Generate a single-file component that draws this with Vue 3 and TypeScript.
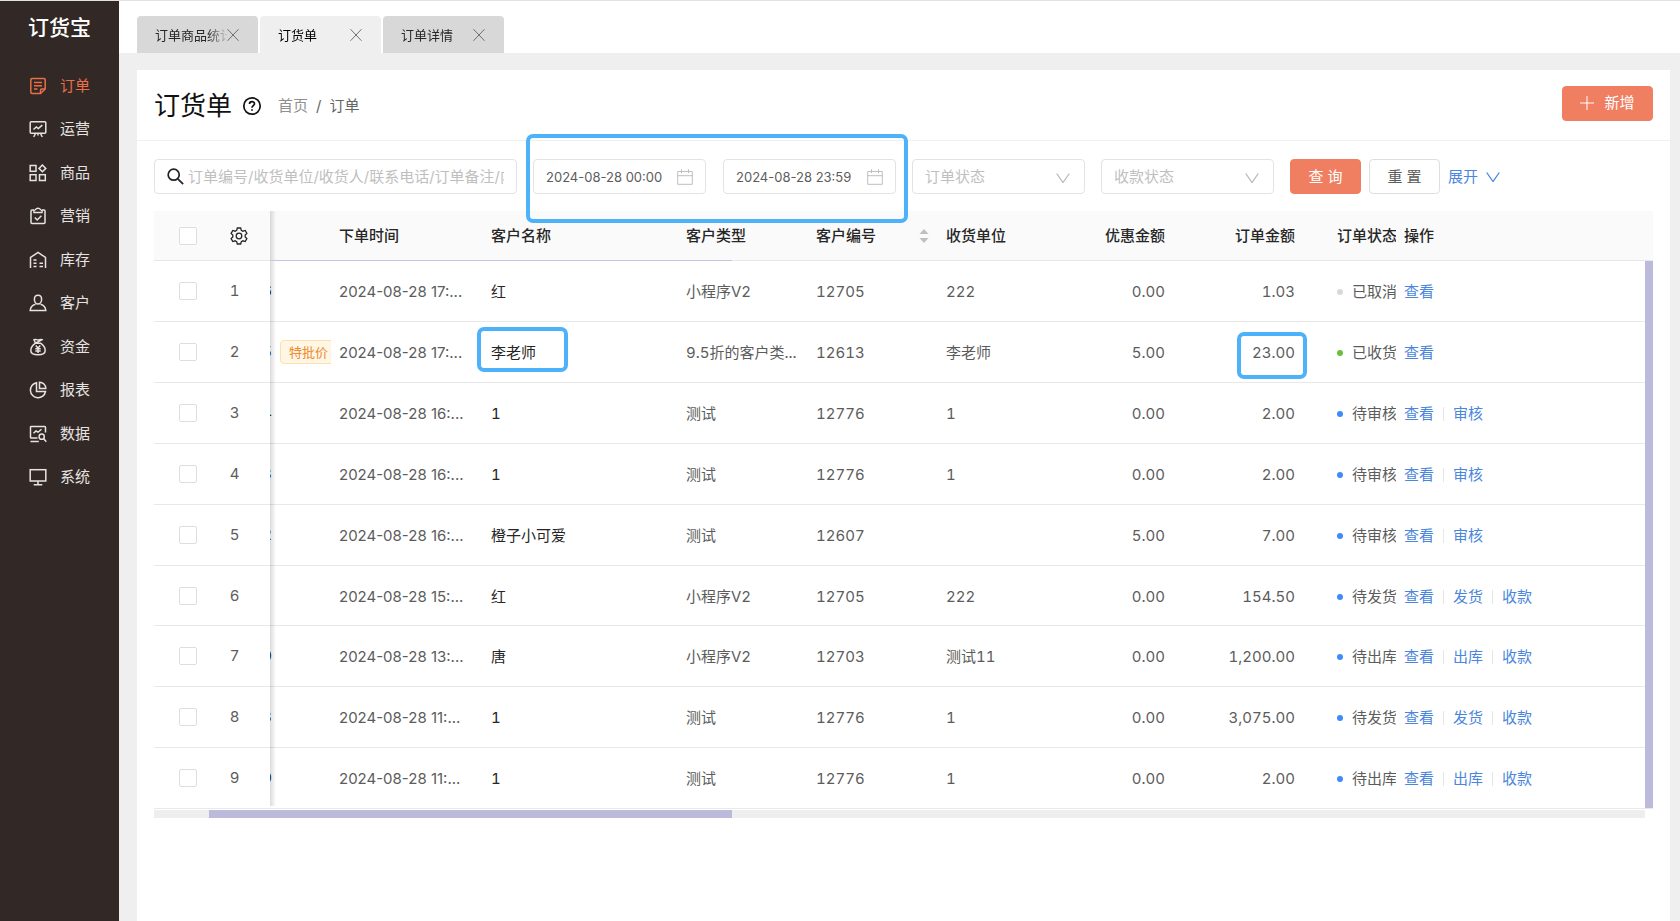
<script setup lang="ts">
import { ref } from 'vue'

interface Row {
  no: string
  time: string
  name: string
  type: string
  code: string
  unit: string
  discount: string
  amount: string
  status: string
  tone: 'gray' | 'green' | 'blue'
  actions: string[]
  tag?: string
  mark?: boolean
}

const menu = [
  { label: '订单', icon: 'order' },
  { label: '运营', icon: 'board' },
  { label: '商品', icon: 'goods' },
  { label: '营销', icon: 'clip' },
  { label: '库存', icon: 'store' },
  { label: '客户', icon: 'user' },
  { label: '资金', icon: 'money' },
  { label: '报表', icon: 'pie' },
  { label: '数据', icon: 'data' },
  { label: '系统', icon: 'screen' },
]

const tabs = ['订单商品统计', '订货单', '订单详情']
const activeTab = ref(1)
const keyword = ref('')
const start = ref('2024-08-28 00:00')
const end = ref('2024-08-28 23:59')
const orderStatus = ref('')
const payStatus = ref('')

const rows: Row[] = [
  { no: '6', time: '2024-08-28 17:...', name: '红', type: '小程序V2', code: '12705', unit: '222', discount: '0.00', amount: '1.03', status: '已取消', tone: 'gray', actions: ['查看'] },
  { no: '5', time: '2024-08-28 17:...', name: '李老师', type: '9.5折的客户类...', code: '12613', unit: '李老师', discount: '5.00', amount: '23.00', status: '已收货', tone: 'green', actions: ['查看'], tag: '特批价', mark: true },
  { no: '4', time: '2024-08-28 16:...', name: '1', type: '测试', code: '12776', unit: '1', discount: '0.00', amount: '2.00', status: '待审核', tone: 'blue', actions: ['查看', '审核'] },
  { no: '3', time: '2024-08-28 16:...', name: '1', type: '测试', code: '12776', unit: '1', discount: '0.00', amount: '2.00', status: '待审核', tone: 'blue', actions: ['查看', '审核'] },
  { no: '2', time: '2024-08-28 16:...', name: '橙子小可爱', type: '测试', code: '12607', unit: '', discount: '5.00', amount: '7.00', status: '待审核', tone: 'blue', actions: ['查看', '审核'] },
  { no: '', time: '2024-08-28 15:...', name: '红', type: '小程序V2', code: '12705', unit: '222', discount: '0.00', amount: '154.50', status: '待发货', tone: 'blue', actions: ['查看', '发货', '收款'] },
  { no: '0', time: '2024-08-28 13:...', name: '唐', type: '小程序V2', code: '12703', unit: '测试11', discount: '0.00', amount: '1,200.00', status: '待出库', tone: 'blue', actions: ['查看', '出库', '收款'] },
  { no: '3', time: '2024-08-28 11:...', name: '1', type: '测试', code: '12776', unit: '1', discount: '0.00', amount: '3,075.00', status: '待发货', tone: 'blue', actions: ['查看', '发货', '收款'] },
  { no: '0', time: '2024-08-28 11:...', name: '1', type: '测试', code: '12776', unit: '1', discount: '0.00', amount: '2.00', status: '待出库', tone: 'blue', actions: ['查看', '出库', '收款'] },
]
</script>

<template>
  <div class="app">
    <aside class="side">
      <div class="logo">订货宝</div>
      <nav class="menu">
        <a v-for="(m, i) in menu" :key="m.label" href="#" class="item" :class="{ on: i === 0 }">
          <svg class="ico" viewBox="0 0 18 18" aria-hidden="true">
            <g v-if="m.icon === 'order'">
              <path d="M11.5 16.5H3a1.2 1.2 0 0 1-1.2-1.2V2.7A1.2 1.2 0 0 1 3 1.5h12a1.2 1.2 0 0 1 1.2 1.2V12z" />
              <path d="M16 12h-3.3a1.2 1.2 0 0 0-1.2 1.2v3.2M5 5.500h8M5 8.700h8M5 12h3.500" />
            </g>
            <g v-else-if="m.icon === 'board'">
              <rect x="1.2" y="1.7" width="15.6" height="11.6" rx="1" />
              <path d="M4.500 9.500 7.300 7l2 1.500 4-3.300M6.500 13.500 4.700 17M11.500 13.500l1.800 3.500M9 13.500v2" />
            </g>
            <g v-else-if="m.icon === 'goods'">
              <rect x="1.2" y="1.5" width="5.8" height="5.8" />
              <rect x="1.2" y="10.7" width="5.8" height="5.8" />
              <rect x="10.5" y="10.7" width="5.8" height="5.8" />
              <path d="m13.400 1 3.400 3.400-3.400 3.400L10 4.400z" />
            </g>
            <g v-else-if="m.icon === 'clip'">
              <path d="M5 3H3a1 1 0 0 0-1 1v11.500a1 1 0 0 0 1 1h12a1 1 0 0 0 1-1V4a1 1 0 0 0-1-1h-2" />
              <path d="M5 5.500V3.700C6 3.700 6.500 1.200 9 1.200s3 2.500 4 2.500v1.800zM5.800 10.500 8.200 13l4.200-4.200" />
            </g>
            <g v-else-if="m.icon === 'store'">
              <path d="M1.500 17V6.500L9 1.500l7.500 5V17M4.500 9h3M4.500 12.200h3M4.500 15.500h3M10.500 12.200h3.500M10.500 15.500h3.500" />
            </g>
            <g v-else-if="m.icon === 'user'">
              <path d="M9 1.200c2.300 0 3.600 1.700 3.600 4S11.200 10 9 10 5.400 7.500 5.400 5.200 6.700 1.200 9 1.200z" />
              <path d="M6.500 10.200C3.500 11 1.500 12.800 1.200 16.500h15.600c-.3-3.700-2.300-5.500-5.300-6.300" />
            </g>
            <g v-else-if="m.icon === 'money'">
              <path d="M6.500 5.200h5c3 2 4.700 4.500 4.700 7.300 0 2.700-2 4.300-7.200 4.300s-7.200-1.600-7.200-4.300c0-2.800 1.700-5.300 4.700-7.300L5 1.700c1.500-.9 2.500.3 4 .3s2.500-1.200 4-.3z" />
              <path d="M6.700 7.500 9 10l2.300-2.500M9 10v5M6.300 10.700h5.400M6.300 13h5.400" />
            </g>
            <g v-else-if="m.icon === 'pie'">
              <path d="M7.500 1.700A7.600 7.600 0 1 0 16.500 10.500h-9z" />
              <path d="M10.500 1.200v6.300h6.300c0-3.500-2.800-6.300-6.300-6.300z" />
            </g>
            <g v-else-if="m.icon === 'data'">
              <path d="M16.500 7.500V2.200a.8.8 0 0 0-.8-.8H2.300a.8.8 0 0 0-.8.8v10.100c0 .5.300.8.8.8h6.200M1.500 16.500h8.300M4.500 8.300 7 6l2 1.200 3.500-3" />
              <circle cx="12.7" cy="11.7" r="2.6" />
              <path d="m14.500 13.600 2.800 3.200" />
            </g>
            <g v-else>
              <rect x="1.2" y="1.7" width="15.6" height="11.3" />
              <path d="M9 13v3.500M4.700 16.700h8.600" />
            </g>
          </svg>
          <span>{{ m.label }}</span>
        </a>
      </nav>
    </aside>

    <div class="main">
      <div class="tabs">
        <div v-for="(t, i) in tabs" :key="t" class="tab" :class="{ active: i === activeTab }">
          <button class="tab-name" type="button" @click="activeTab = i">{{ t }}</button>
          <button class="tab-close" type="button" aria-label="关闭">
            <svg viewBox="0 0 12 12"><path d="M.5.200 11.500 11.800M11.500.200.5 11.800" /></svg>
          </button>
        </div>
      </div>

      <main class="card">
        <header class="head">
          <h1>订货单</h1>
          <svg class="help" viewBox="0 0 20 20" aria-hidden="true">
            <circle cx="10" cy="10" r="8.2" />
            <path d="M7.500 8c0-3.200 5-3.100 5-.2 0 1.800-2.500 2-2.500 3.900" />
            <path d="M10 13.200v1.500" />
          </svg>
          <div class="crumb"><a href="#">首页</a><i>/</i><span>订单</span></div>
          <button class="btn primary add" type="button">
            <svg viewBox="0 0 14 14" aria-hidden="true"><path d="M7 0v14M0 7h14" /></svg>新增
          </button>
        </header>

        <form class="filters" @submit.prevent>
          <label class="field search">
            <svg viewBox="0 0 16 16" aria-hidden="true"><circle cx="6.3" cy="6.3" r="5.2" /><path d="m10.200 10.200 5 5" /></svg>
            <input v-model="keyword" type="text" aria-label="关键字" placeholder="订单编号/收货单位/收货人/联系电话/订单备注/内部备注">
          </label>
          <div class="range">
            <label class="field date">
              <input v-model="start" type="text" aria-label="开始时间">
              <svg viewBox="0 0 16 16" aria-hidden="true"><path d="M.7 2.500h14.600v12.800H.7zM.7 6.700h14.600M4.500.200v4M11.500.200v4" /></svg>
            </label>
            <label class="field date">
              <input v-model="end" type="text" aria-label="结束时间">
              <svg viewBox="0 0 16 16" aria-hidden="true"><path d="M.7 2.500h14.600v12.800H.7zM.7 6.700h14.600M4.500.200v4M11.500.200v4" /></svg>
            </label>
            <span class="mark mark-range"></span>
          </div>
          <label class="field pick">
            <select v-model="orderStatus" aria-label="订单状态"><option value="">订单状态</option></select>
            <svg viewBox="0 0 14 10" aria-hidden="true"><path d="m.7.500 6.300 9 6.300-9" /></svg>
          </label>
          <label class="field pick">
            <select v-model="payStatus" aria-label="收款状态"><option value="">收款状态</option></select>
            <svg viewBox="0 0 14 10" aria-hidden="true"><path d="m.7.500 6.300 9 6.300-9" /></svg>
          </label>
          <div class="acts">
            <button class="btn primary" type="submit">查 询</button>
            <button class="btn" type="reset">重 置</button>
            <button class="more" type="button">
              展开<svg viewBox="0 0 14 10" aria-hidden="true"><path d="m.7.500 6.300 9 6.300-9" /></svg>
            </button>
          </div>
        </form>

        <div class="grid">
          <table>
            <colgroup>
              <col class="c-check"><col class="c-num"><col class="c-tag"><col class="c-time"><col class="c-name"><col class="c-type">
              <col class="c-code"><col class="c-unit"><col class="c-disc"><col class="c-amt"><col class="c-stat"><col><col class="c-bar">
            </colgroup>
            <thead>
              <tr>
                <th class="check"><input type="checkbox" aria-label="全选"></th>
                <th class="num">
                  <svg class="gear" viewBox="0 0 18 18" aria-label="设置">
                    <path d="M7.300 1h3.400l.6 2.300 1.600.9 2.300-.7 1.700 2.900-1.700 1.700v1.800l1.700 1.700-1.700 2.900-2.300-.7-1.600.9-.6 2.300H7.300l-.6-2.300-1.600-.9-2.300.7-1.700-2.900 1.700-1.700V8.100L1.100 6.400l1.700-2.900 2.300.7 1.600-.9z" />
                    <circle cx="9" cy="9" r="2.8" />
                  </svg>
                </th>
                <th></th>
                <th>下单时间</th>
                <th>客户名称</th>
                <th>客户类型</th>
                <th>
                  <div class="sortable">客户编号<svg viewBox="0 0 10 14" aria-hidden="true"><path d="m5 0 4.500 5H.500zM5 14l4.500-5H.500z" /></svg></div>
                </th>
                <th>收货单位</th>
                <th class="r">优惠金额</th>
                <th class="r">订单金额</th>
                <th class="stat"><div>订单状态</div></th>
                <th>操作</th>
                <th></th>
              </tr>
            </thead>
            <tbody>
              <tr v-for="(r, i) in rows" :key="i">
                <td class="check"><input type="checkbox" :aria-label="'选择第' + (i + 1) + '行'"></td>
                <td class="num">{{ i + 1 }}</td>
                <td class="tagcell"><div><span class="no">{{ r.no }}</span><span v-if="r.tag" class="tag">{{ r.tag }}</span></div></td>
                <td class="time">{{ r.time }}</td>
                <td class="dark"><span class="hold">{{ r.name }}<span v-if="r.mark" class="mark mark-name"></span></span></td>
                <td>{{ r.type }}</td>
                <td>{{ r.code }}</td>
                <td>{{ r.unit }}</td>
                <td class="r">{{ r.discount }}</td>
                <td class="r"><span class="hold">{{ r.amount }}<span v-if="r.mark" class="mark mark-amt"></span></span></td>
                <td class="stat"><div><span class="dot" :class="r.tone"></span>{{ r.status }}</div></td>
                <td><div class="links"><a v-for="a in r.actions" :key="a" href="#">{{ a }}</a></div></td>
                <td v-if="i === 0" class="vbar" :rowspan="rows.length"></td>
              </tr>
            </tbody>
          </table>
          <span class="edge"></span>
          <span class="headline"></span>
          <div class="hbar"><span></span></div>
        </div>
      </main>
    </div>
  </div>
</template>

<style>
body {
  background: #efefef;
}
</style>

<style scoped>
* {
  box-sizing: border-box;
}
.app {
  display: flex;
  min-height: 100vh;
  border-top: 1px solid #e2e2e2;
  font: 15px/22px Inter, "Noto Sans CJK SC", sans-serif;
  color: #5c5c5c;
}
button,
input,
select {
  font: inherit;
  color: inherit;
}
button {
  border: 0;
  padding: 0;
  background: none;
  cursor: pointer;
}
a {
  text-decoration: none;
  color: inherit;
}
svg {
  fill: none;
  stroke: currentColor;
  flex: none;
}

/* sidebar */
.side {
  flex: 0 0 119px;
  background: #322926;
  color: #e6e3e2;
}
.logo {
  height: 63px;
  padding: 12px 0 0 28px;
  font-size: 21px;
  line-height: 30px;
  font-weight: 500;
  color: #fff;
}
.menu {
  height: 435px;
  display: grid;
  grid-auto-rows: 1fr;
}
.item {
  display: flex;
  align-items: center;
  gap: 13px;
  padding-left: 29px;
}
.item.on {
  color: #ea6e47;
}
.ico {
  width: 18px;
  height: 18px;
  stroke-width: 1.5;
}

/* tabs */
.main {
  flex: 1;
  min-width: 0;
  display: flex;
  flex-direction: column;
  background: #efefef;
}
.tabs {
  display: flex;
  gap: 2px;
  height: 52px;
  padding: 15px 18px 0;
  background: #fff;
}
.tab {
  width: 121px;
  display: flex;
  align-items: center;
  padding: 0 19px 0 18px;
  border-radius: 4px 4px 0 0;
  background: #d8d8d8;
  color: #262626;
  font-size: 13px;
}
.tab.active {
  background: #efefef;
  color: #000;
}
.tab-name {
  flex: 1;
  min-width: 0;
  overflow: hidden;
  white-space: nowrap;
  text-align: left;
  -webkit-mask-image: linear-gradient(90deg, #000 52px, transparent 74px);
  mask-image: linear-gradient(90deg, #000 52px, transparent 74px);
}
.tab-close {
  flex: none;
  display: flex;
  color: #707070;
}
.tab-close svg {
  width: 12px;
  height: 12px;
}

/* card */
.card {
  flex: 1;
  margin: 17px 10px 0 18px;
  background: #fff;
}
.head {
  height: 71px;
  display: flex;
  align-items: center;
  padding: 2px 17px 0;
  border-bottom: 1px solid #f0f0f0;
}
h1 {
  margin: 0;
  font-size: 26px;
  line-height: 36px;
  font-weight: 400;
  color: #111;
}
.help {
  width: 20px;
  height: 20px;
  margin-left: 10px;
  color: #111;
  stroke-width: 1.7;
}
.crumb {
  margin-left: 16px;
  color: #666;
}
.crumb a {
  color: #8f8f8f;
}
.crumb i {
  margin: 0 8px;
  font-style: normal;
}
.btn {
  height: 35px;
  width: 71px;
  border: 1px solid #dedede;
  border-radius: 4px;
  background: #fff;
  white-space: nowrap;
}
.btn.primary {
  border-color: #f07f62;
  background: #f07f62;
  color: #fff;
}
.add {
  width: 91px;
  margin: 0 0 6px auto;
  display: flex;
  align-items: center;
  justify-content: center;
  gap: 10px;
}
.add svg {
  width: 14px;
  height: 14px;
}

/* filters */
.filters {
  display: flex;
  gap: 16px;
  padding: 18px 17px 17px;
}
.field {
  height: 35px;
  display: flex;
  align-items: center;
  border: 1px solid #e3e3e3;
  border-radius: 4px;
  background: #fff;
}
.field input,
.field select {
  flex: 1;
  min-width: 0;
  width: 100%;
  height: 30px;
  padding: 0;
  border: 0;
  outline: 0;
  background: none;
  appearance: none;
}
.field ::placeholder {
  color: #bfbfbf;
  opacity: 1;
}
.search {
  flex: 0 1 363px;
  padding: 0 12px;
  gap: 4px;
}
.search svg {
  width: 17px;
  height: 17px;
  color: #222;
  stroke-width: 1.6;
}
.range {
  position: relative;
  display: flex;
  gap: 17px;
}
.date {
  width: 173px;
  padding: 0 12px;
  font-size: 13px;
}
.date svg {
  width: 16px;
  height: 16px;
  color: #bfbfbf;
}
.pick {
  width: 173px;
  padding: 0 14px 0 12px;
}
.pick select {
  color: #bfbfbf;
}
.pick svg {
  width: 14px;
  height: 10px;
  margin-top: 3px;
  color: #b5b5b5;
  stroke-width: 1.2;
}
.acts {
  display: flex;
  gap: 8px;
}
.more {
  display: flex;
  align-items: center;
  gap: 8px;
  color: #4a86dd;
}
.more svg {
  width: 14px;
  height: 10px;
  stroke-width: 1.3;
}

/* table */
.grid {
  position: relative;
  margin: 0 17px;
}
table {
  width: 100%;
  table-layout: fixed;
  border-collapse: separate;
  border-spacing: 0;
  font-variant-numeric: tabular-nums;
}
.c-check { width: 62px; }
.c-num { width: 54px; }
.c-tag { width: 61px; }
.c-time { width: 152px; }
.c-name { width: 195px; }
.c-type { width: 130px; }
.c-code { width: 130px; }
.c-unit { width: 129px; }
.c-disc { width: 106px; }
.c-amt { width: 130px; }
.c-stat { width: 93px; }
.c-bar { width: 8px; }
th,
td {
  padding: 0 8px;
  border-bottom: 1px solid #e8e8e8;
  text-align: left;
  white-space: nowrap;
  font-weight: 400;
}
th {
  height: 50px;
  background: #fafafa;
  color: #262626;
  font-weight: 500;
}
td {
  height: 61px;
  padding-top: 2px;
}
tbody tr:nth-child(6) td {
  height: 60px;
}
.time {
  font-variant-numeric: normal;
}
.check {
  padding: 0 0 0 25px;
}
.check input {
  display: block;
  appearance: none;
  width: 18px;
  height: 18px;
  margin: 0;
  border: 1px solid #dedede;
  border-radius: 2px;
  background: #fff;
}
td.num {
  padding: 0 17px 0 0;
  text-align: center;
}
th.num {
  padding: 0 0 0 14px;
}
.gear {
  display: block;
  width: 18px;
  height: 18px;
  stroke-width: 1.3;
}
.r {
  text-align: right;
}
.dark {
  color: #262626;
}
.sortable {
  display: flex;
  align-items: center;
  justify-content: space-between;
}
.sortable svg {
  width: 10px;
  height: 14px;
  margin-right: 1px;
  fill: #bfbfbf;
  stroke: none;
}
td.tagcell {
  padding: 0;
}
.tagcell div {
  display: flex;
  align-items: center;
  gap: 8px;
  overflow: hidden;
}
.no {
  flex: none;
  width: 2px;
  height: 22px;
  display: flex;
  justify-content: flex-end;
  overflow: hidden;
  color: #262626;
}
.tag {
  flex: none;
  padding: 0 8px;
  border: 1px solid #ffdfa8;
  border-radius: 4px;
  background: #fff6e6;
  color: #ee8a2c;
  font-size: 13px;
}
th.stat {
  padding: 0 0 0 34px;
}
td.stat {
  padding: 2px 0 0 34px;
}
.stat div {
  overflow: hidden;
}
.dot {
  display: inline-block;
  width: 6px;
  height: 6px;
  margin-right: 9px;
  border-radius: 50%;
  vertical-align: 2px;
}
.dot.gray { background: #d9d9d9; }
.dot.green { background: #67c23a; }
.dot.blue { background: #3d8bfd; }
.links {
  display: flex;
  color: #4a86dd;
}
.links a + a {
  margin-left: 9px;
  padding-left: 10px;
  background: linear-gradient(#e6e6e6, #e6e6e6) 0 50% / 1px 14px no-repeat;
}
td.vbar {
  padding: 0;
  background: #bbbadb;
}
.edge {
  position: absolute;
  left: 116px;
  top: 0;
  bottom: 12px;
  width: 6px;
  background: linear-gradient(90deg, rgba(0, 0, 0, 0.14), rgba(0, 0, 0, 0));
}
.headline {
  position: absolute;
  left: 116px;
  top: 49px;
  width: 462px;
  height: 1px;
  background: #c6c5e2;
}
.hbar {
  height: 8px;
  margin: 1px 8px 0 0;
  background: #eee;
}
.hbar span {
  display: block;
  width: 523px;
  height: 8px;
  margin-left: 55px;
  background: #bbbadb;
}

/* highlight frames */
.hold {
  position: relative;
}
.mark {
  position: absolute;
  border: 4px solid #4db2fa;
  border-radius: 7px;
  pointer-events: none;
}
.mark-range {
  inset: -25px -12px -29px -7px;
  z-index: 2;
}
.mark-name {
  inset: -16px -32px -10px -14px;
}
.mark-amt {
  inset: -11px -12px -17px -15px;
}
</style>
